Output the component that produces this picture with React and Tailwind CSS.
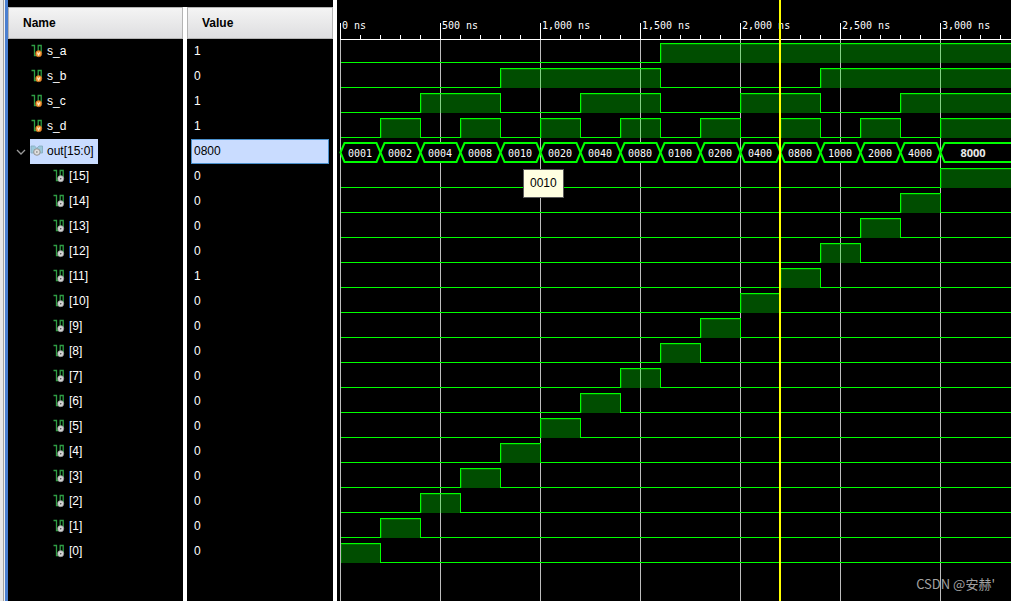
import React from "react";

const NS_TO_PX = 1 / 5;
const ROW_HEIGHT = 25;
const HEADER_BOTTOM = 39;
const FAR = 6000;

const inputs = [
  { name: "s_a", value: "1", high: [[1600, null]] },
  { name: "s_b", value: "0", high: [[800, 1600], [2400, null]] },
  { name: "s_c", value: "1", high: [[400, 800], [1200, 1600], [2000, 2400], [2800, null]] },
  {
    name: "s_d",
    value: "1",
    high: [[200, 400], [600, 800], [1000, 1200], [1400, 1600], [1800, 2000], [2200, 2400], [2600, 2800], [3000, null]],
  },
];

const bits = Array.from({ length: 16 }, (_, i) => {
  const bit = 15 - i;
  return {
    name: `[${bit}]`,
    value: bit === 11 ? "1" : "0",
    high: [[bit * 200, bit === 15 ? null : (bit + 1) * 200]],
  };
});

const busValues = Array.from({ length: 16 }, (_, i) => (1 << i).toString(16).padStart(4, "0"));

function SignalIcon({ kind }) {
  const input = kind === "input";
  return (
    <svg className="h-[14px] w-[13px] shrink-0" viewBox="0 0 13 14" aria-hidden="true">
      <path d="M1.5 1.5H4.5V11.5H8.2V1.5H11.2V9" fill="none" stroke="#2f9e44" strokeWidth="1.3" />
      <circle cx="8.7" cy="9.7" r="3.1" fill={input ? "#f39a35" : "#cfcfcf"} stroke={input ? "#c8641a" : "#8c8c8c"} strokeWidth="0.5" />
      {input ? (
        <path d="M7.4 8.6L8.5 10.8L10 8.4" fill="none" stroke="#ffe9c8" strokeWidth="1.1" />
      ) : (
        <circle cx="8.7" cy="9.7" r="1.3" fill="#555" stroke="#f4f4f4" strokeWidth="0.8" />
      )}
    </svg>
  );
}

function BusIcon() {
  return (
    <svg className="h-[14px] w-[13px] shrink-0" viewBox="0 0 13 14" aria-hidden="true">
      <path d="M1 2H4.5L6.8 4.2L9 2H12.5V9H9L6.8 6.5L4.5 9H1Z" fill="#9cc9dc" stroke="#84aabd" strokeWidth="0.8" />
      <circle cx="6.9" cy="8" r="3.3" fill="#d5d5d5" stroke="#8e8e8e" strokeWidth="0.9" />
      <circle cx="6.9" cy="8" r="1.3" fill="#777" stroke="#fff" strokeWidth="0.7" />
    </svg>
  );
}

function HeaderCell({ children, className }) {
  return (
    <th className="border-r-4 border-white p-0 text-left font-bold">
      <div className={`flex h-8 items-center border border-[#b4b4b4] bg-linear-to-b from-[#f4f4f4] to-[#dedee0] text-black ${className}`}>
        {children}
      </div>
    </th>
  );
}

function SignalRow({ signal, kind }) {
  return (
    <tr>
      <td className="border-r-4 border-white p-0">
        <div className={`flex h-[25px] items-center gap-1 pb-[2px] ${kind === "input" ? "pl-[22px]" : "pl-11"}`}>
          <SignalIcon kind={kind} />
          {signal.name}
        </div>
      </td>
      <td className="border-r-4 border-white p-0">
        <div className="flex h-[25px] items-center pb-[2px] pl-[7px]">{signal.value}</div>
      </td>
    </tr>
  );
}

function SignalTable() {
  return (
    <div className="flex shrink-0 flex-col">
      <div className="flex h-[7px] justify-end">
        <div className="w-1 bg-white" />
      </div>
      <table className="w-[329px] table-fixed border-separate border-spacing-0">
        <colgroup>
          <col className="w-[179px]" />
          <col className="w-[150px]" />
        </colgroup>
        <thead>
          <tr>
            <HeaderCell className="pl-[14px]">Name</HeaderCell>
            <HeaderCell className="pl-[14px]">Value</HeaderCell>
          </tr>
        </thead>
        <tbody>
          {inputs.map((s) => (
            <SignalRow key={s.name} signal={s} kind="input" />
          ))}
          <tr>
            <td className="border-r-4 border-white p-0">
              <div className="flex items-center pl-2">
                <button type="button" aria-label="Collapse out[15:0]" aria-expanded="true" className="flex w-[14px] items-center">
                  <svg className="h-[6px] w-[10px]" viewBox="0 0 10 6" aria-hidden="true">
                    <path d="M1 1L5 5L9 1" fill="none" stroke="#9a9a9a" strokeWidth="1.3" />
                  </svg>
                </button>
                <div className="flex h-[25px] items-center gap-1 bg-[#c9dcff] pr-1 pb-[2px] text-black">
                  <BusIcon />
                  out[15:0]
                </div>
              </div>
            </td>
            <td className="border-r-4 border-white px-1 py-0">
              <div className="flex h-[25px] items-center border border-[#4a90cc] bg-[#c9dcff] pb-[2px] pl-[2px] text-black">0800</div>
            </td>
          </tr>
          {bits.map((s) => (
            <SignalRow key={s.name} signal={s} kind="bit" />
          ))}
        </tbody>
      </table>
      <div className="flex flex-1">
        <div className="w-[179px] border-r-4 border-white" />
        <div className="w-[150px] border-r-4 border-white" />
      </div>
    </div>
  );
}

function Ruler() {
  const major = Array.from({ length: 7 }, (_, i) => i);
  const minor = Array.from({ length: 35 }, (_, i) => i * 20);
  return (
    <g shapeRendering="crispEdges">
      {major.map((i) => (
        <rect key={i} x={i * 100} y={HEADER_BOTTOM} width="1" height="100%" fill="#bdbdbd" />
      ))}
      {major.map((i) => (
        <rect key={i} x={i * 100} y="23" width="1" height="17" fill="#fff" />
      ))}
      {minor.map((x) => (
        <rect key={x} x={x} y="35" width="1" height="4" fill="#fff" />
      ))}
      <rect x="0" y={HEADER_BOTTOM} width={FAR} height="1" fill="#fff" />
      {major.map((i) => (
        <text key={i} x={i * 100 + 2} y="29" fill="#fff" className="font-['DejaVu_Sans_Mono',monospace] text-[10px]">
          {`${(i * 500).toLocaleString("en-US")} ns`}
        </text>
      ))}
    </g>
  );
}

function Wave({ high, row }) {
  const top = HEADER_BOTTOM + row * ROW_HEIGHT + 4;
  const low = top + 19;
  const spans = high.map(([a, b]) => [a * NS_TO_PX, b === null ? FAR : b * NS_TO_PX]);
  let d = `M0.5 ${(spans[0][0] === 0 ? top : low) + 0.5}`;
  spans.forEach(([a, b]) => {
    if (a > 0) d += `H${a + 0.5}V${top + 0.5}`;
    d += `H${b + 0.5}`;
    if (b !== FAR) d += `V${low + 0.5}`;
  });
  d += `H${FAR}`;
  return (
    <g shapeRendering="crispEdges">
      {spans.map(([a, b]) => (
        <g key={a} fill="#00ff00">
          <rect x={a + 1} y={top + 1} width={b - a - 1} height="19" fillOpacity="0.3" />
          <rect x={a + 1} y={top + 1} width={b - a - 1} height="1" fillOpacity="0.2" />
          <rect x={a + 1} y={top + 2} width="1" height="18" fillOpacity="0.2" />
        </g>
      ))}
      <path d={d} fill="none" stroke="#00ff00" />
    </g>
  );
}

function BusWave() {
  const top = 143;
  const mid = 152.5;
  const bottom = 162;
  return (
    <g>
      {busValues.map((value, i) => {
        const a = i * 40;
        const last = i === busValues.length - 1;
        const b = last ? FAR : a + 40;
        return (
          <g key={value}>
            <path
              d={`M${a + 0.5} ${mid}L${a + 4.5} ${top}H${b - 3.5}L${b + 0.5} ${mid}L${b - 3.5} ${bottom}H${a + 4.5}Z`}
              fill="#000"
              stroke="#00ff00"
              strokeWidth="2"
            />
            {last ? (
              <text x={a + 33} y="157" textAnchor="middle" fill="#e8e8e8" className="font-['Open_Sans',sans-serif] text-[11px] font-bold">
                {value}
              </text>
            ) : (
              <text x={a + 20} y="157" textAnchor="middle" fill="#fff" className="font-['DejaVu_Sans_Mono',monospace] text-[10px]">
                {value}
              </text>
            )}
          </g>
        );
      })}
    </g>
  );
}

function WavePanel() {
  return (
    <div className="relative min-w-0 flex-1 overflow-hidden bg-black">
      <svg className="block min-h-screen w-full" role="img" aria-label="Signal waveforms">
        <g transform="translate(3 0)">
          <Ruler />
          {inputs.map((s, i) => (
            <Wave key={s.name} high={s.high} row={i} />
          ))}
          <BusWave />
          {bits.map((s, i) => (
            <Wave key={s.name} high={s.high} row={i + 5} />
          ))}
        </g>
      </svg>
      <div className="absolute inset-y-0 left-[442px] w-[2px] bg-[#ffff00]" />
      <div role="tooltip" className="absolute top-[169px] left-[186px] flex h-[29px] items-center border border-[#5a5a5a] bg-[#ffffe1] px-[6px] pb-[2px] text-black">
        0010
      </div>
      <div className="absolute right-4 bottom-2 font-['Noto_Sans_CJK_SC',sans-serif] text-[13px] leading-[18px] text-[#a3a3a3]">
        CSDN @安赫'
      </div>
    </div>
  );
}

export default function App() {
  return (
    <main className="flex min-h-screen bg-black font-['Liberation_Sans',sans-serif] text-[12px] leading-4 text-white">
      <div className="flex shrink-0">
        <div className="w-[3px] bg-[#e6e6e6]" />
        <div className="w-px bg-[#a0a0a0]" />
        <div className="w-px bg-[#f0f0f0]" />
        <div className="w-[3px] bg-[#4a7fd0]" />
      </div>
      <SignalTable />
      <WavePanel />
    </main>
  );
}
